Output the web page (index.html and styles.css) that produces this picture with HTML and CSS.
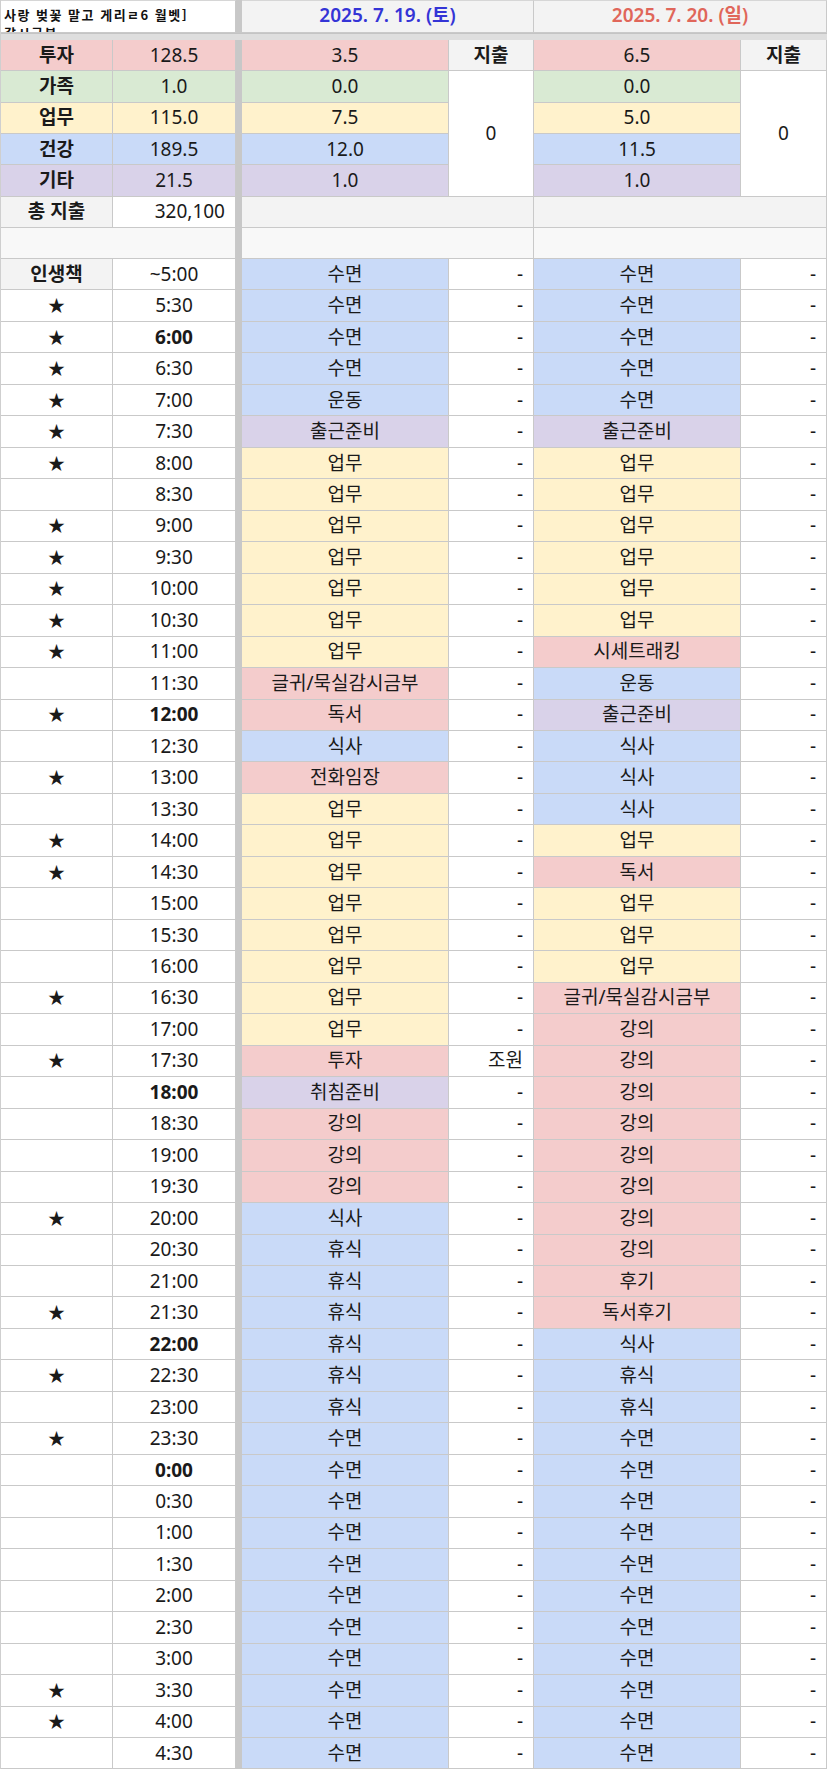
FILE: index.html
```html
<!DOCTYPE html>
<html lang="ko">
<head>
<meta charset="utf-8">
<link rel="stylesheet" href="styles.css">
</head>
<body>
<div class="sheet" id="sheet">
  <div class="c title"><span>사랑 벚꽃 말고 게리ㄹ6 월벳]<br>갈시금본</span></div>
  <div class="sep sep-top"></div>
  <div class="c date blue-t">2025. 7. 19. (토)</div>
  <div class="c date red-t">2025. 7. 20. (일)</div>
  <div class="band"></div>
  <div class="sep sep-main"></div>

  <div class="c lbl red">투자</div><div class="c red">128.5</div>
  <div class="c red">3.5</div><div class="c lbl hd">지출</div>
  <div class="c red">6.5</div><div class="c lbl hd">지출</div>

  <div class="c lbl green">가족</div><div class="c green">1.0</div>
  <div class="c green">0.0</div><div class="c zero z1">0</div>
  <div class="c green">0.0</div><div class="c zero z2">0</div>

  <div class="c lbl yellow">업무</div><div class="c yellow">115.0</div>
  <div class="c yellow">7.5</div><div class="c yellow">5.0</div>

  <div class="c lbl blue">건강</div><div class="c blue">189.5</div>
  <div class="c blue">12.0</div><div class="c blue">11.5</div>

  <div class="c lbl purple">기타</div><div class="c purple">21.5</div>
  <div class="c purple">1.0</div><div class="c purple">1.0</div>

  <div class="c lbl hd">총 지출</div><div class="c num">320,100</div>
  <div class="c hd span2"></div><div class="c hd span2"></div>

  <div class="c blank span2"></div>
  <div class="c blank span2"></div><div class="c blank span2"></div>
</div>
<script src="app.js"></script>
</body>
</html>
```

FILE: app.js
```js
const rows = [
  ["인생책","~5:00","수면","b","수면","b"],
  ["★","5:30","수면","b","수면","b"],
  ["★","*6:00","수면","b","수면","b"],
  ["★","6:30","수면","b","수면","b"],
  ["★","7:00","운동","b","수면","b"],
  ["★","7:30","출근준비","p","출근준비","p"],
  ["★","8:00","업무","y","업무","y"],
  ["","8:30","업무","y","업무","y"],
  ["★","9:00","업무","y","업무","y"],
  ["★","9:30","업무","y","업무","y"],
  ["★","10:00","업무","y","업무","y"],
  ["★","10:30","업무","y","업무","y"],
  ["★","11:00","업무","y","시세트래킹","r"],
  ["","11:30","글귀/묵실감시금부","r","운동","b"],
  ["★","*12:00","독서","r","출근준비","p"],
  ["","12:30","식사","b","식사","b"],
  ["★","13:00","전화임장","r","식사","b"],
  ["","13:30","업무","y","식사","b"],
  ["★","14:00","업무","y","업무","y"],
  ["★","14:30","업무","y","독서","r"],
  ["","15:00","업무","y","업무","y"],
  ["","15:30","업무","y","업무","y"],
  ["","16:00","업무","y","업무","y"],
  ["★","16:30","업무","y","글귀/묵실감시금부","r"],
  ["","17:00","업무","y","강의","r"],
  ["★","17:30","투자","r","강의","r","조원"],
  ["","*18:00","취침준비","p","강의","r"],
  ["","18:30","강의","r","강의","r"],
  ["","19:00","강의","r","강의","r"],
  ["","19:30","강의","r","강의","r"],
  ["★","20:00","식사","b","강의","r"],
  ["","20:30","휴식","b","강의","r"],
  ["","21:00","휴식","b","후기","r"],
  ["★","21:30","휴식","b","독서후기","r"],
  ["","*22:00","휴식","b","식사","b"],
  ["★","22:30","휴식","b","휴식","b"],
  ["","23:00","휴식","b","휴식","b"],
  ["★","23:30","수면","b","수면","b"],
  ["","*0:00","수면","b","수면","b"],
  ["","0:30","수면","b","수면","b"],
  ["","1:00","수면","b","수면","b"],
  ["","1:30","수면","b","수면","b"],
  ["","2:00","수면","b","수면","b"],
  ["","2:30","수면","b","수면","b"],
  ["","3:00","수면","b","수면","b"],
  ["★","3:30","수면","b","수면","b"],
  ["★","4:00","수면","b","수면","b"],
  ["","4:30","수면","b","수면","b"]
];
const cls = {b:"blue", p:"purple", y:"yellow", r:"red"};
const sheet = document.getElementById("sheet");
function cell(text, c) {
  const d = document.createElement("div");
  d.className = "c " + c;
  d.textContent = text;
  sheet.appendChild(d);
}
rows.forEach(r => {
  cell(r[0], r[0] === "인생책" ? "lbl hd" : "star");
  if (r[1][0] === "*") cell(r[1].slice(1), "time hd bold");
  else cell(r[1], "time");
  cell(r[2], cls[r[3]]);
  cell(r[6] || "-", "num");
  cell(r[4], cls[r[5]]);
  cell("-", "num");
});
```

FILE: styles.css
```css
html, body {
  margin: 0;
  padding: 0;
  background: #ffffff;
}
body {
  font-family: "Noto Sans", "Noto Sans CJK KR", sans-serif;
  color: #1a1a1a;
}
.sheet {
  display: grid;
  grid-template-columns: 112px 123px 6px 207px 85px 207px 86px;
  grid-template-rows: 33px 7px repeat(6, 31.33px) 31px repeat(48, 31.48px);
  border-left: 1px solid #cfcfcf;
  width: 826px;
}
.c {
  box-sizing: border-box;
  border-right: 1px solid #c9c9c9;
  border-bottom: 1px solid #c9c9c9;
  display: flex;
  align-items: center;
  justify-content: center;
  font-size: 19px;
  line-height: 1;
  white-space: nowrap;
  overflow: hidden;
}
.title {
  grid-column: 1 / 3;
  grid-row: 1;
  justify-content: flex-start;
  align-items: flex-start;
  background: #fff;
  border-top: 1px solid #d6d6d6;
}
.title span {
  font-family: "Noto Sans CJK KR", sans-serif;
  font-size: 13px;
  font-weight: 700;
  line-height: 18px;
  padding: 5px 0 0 3px;
  letter-spacing: 1.5px;
  color: #111;
}
.date {
  grid-row: 1;
  grid-column: span 2;
  background: #f3f3f3;
  font-weight: 600;
  font-size: 19px;
  padding-bottom: 2px;
  border-top: 1px solid #d6d6d6;
}
.blue-t { color: #3434d6; }
.red-t { color: #e0665a; }
.sep {
  grid-column: 3;
  background: #c8c8c8;
}
.sep-top { grid-row: 1; }
.sep-main { grid-row: 3 / -1; }
.band {
  grid-column: 1 / -1;
  grid-row: 2;
  background: #dedede;
  border-top: 1px solid #c4c4c4;
}
.lbl { font-weight: 700; }
.hd { background: #f3f3f3; }
.bold { font-weight: 700; }
.red { background: #f4cccc; }
.green { background: #d9ead3; }
.yellow { background: #fff2cc; }
.blue { background: #c9daf8; }
.purple { background: #d9d2e9; }
.zero { background: #fff; grid-row: 4 / span 4; }
.z1 { grid-column: 5; }
.z2 { grid-column: 7; }
.num {
  justify-content: flex-end;
  padding-right: 10px;
  background: #fff;
}
.span2 { grid-column: span 2; }
.blank { background: #f8f8f8; }
.star { font-size: 17px; background: #fff; }
.time { background: #fff; }
```
